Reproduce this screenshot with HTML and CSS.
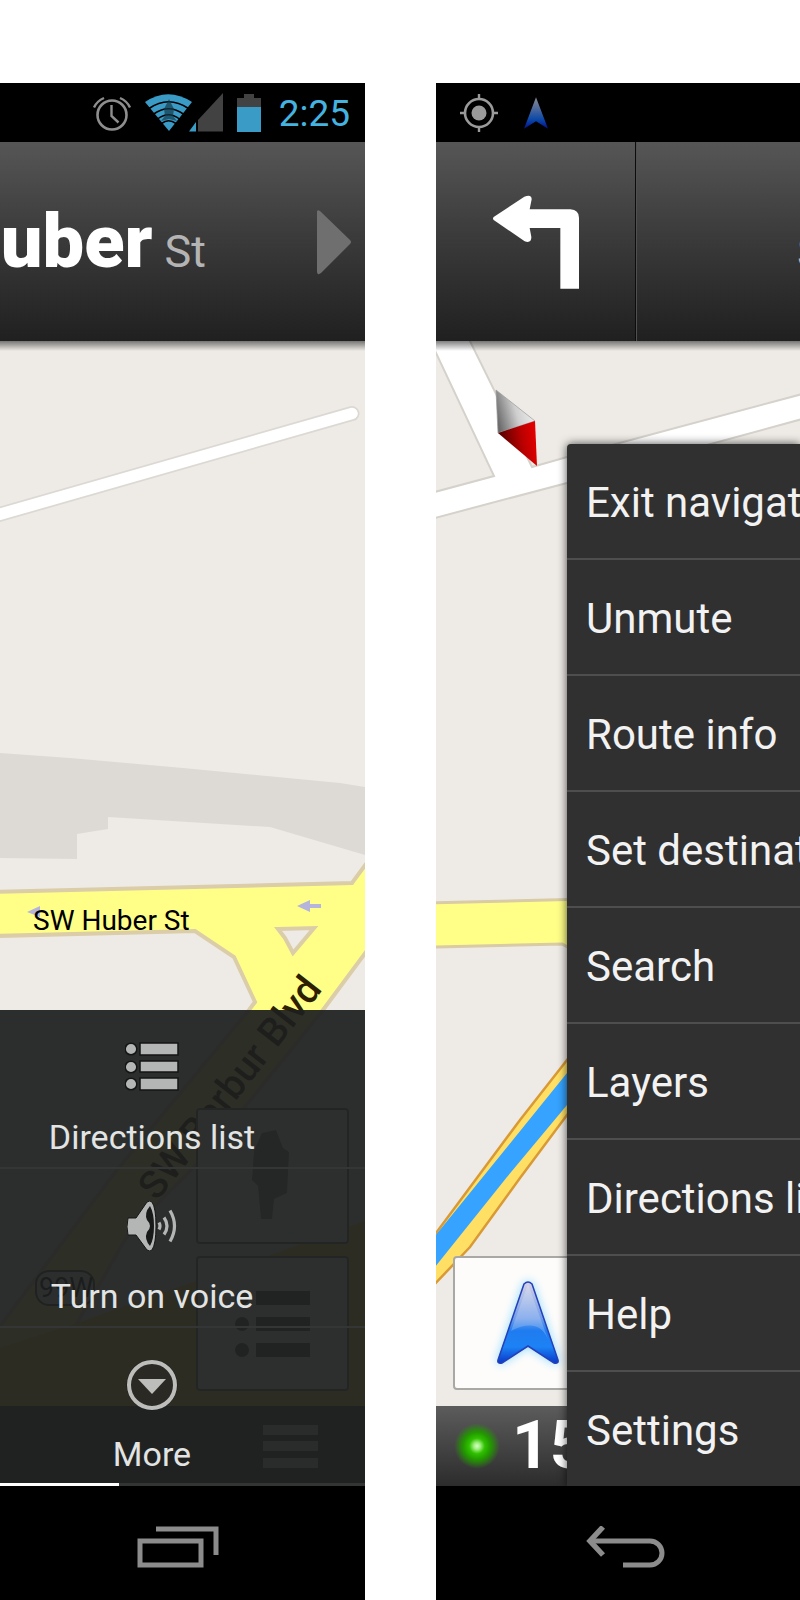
FILE: index.html
```html
<!DOCTYPE html>
<html lang="en">
<head>
  <meta charset="UTF-8">
  <meta name="viewport" content="width=device-width, initial-scale=1.0">
  <title>Navigation menus</title>
  <link rel="stylesheet" href="styles.css">
</head>
<body>
  <main class="screens">

    <section class="phone">
      <div class="status-bar status-right">
        <svg width="38" height="36" viewBox="0 0 38 36" fill="none" stroke="#8e8e8e" stroke-width="3" aria-hidden="true">
          <circle cx="19" cy="20" r="14.5" stroke-width="2.6"/>
          <path d="M18.5 10v11l7 6.5" stroke-width="2.4"/>
          <path d="M1 12.5Q4 6 11 3M37 12.5Q34 6 27 3" stroke-width="2.4"/>
        </svg>
        <svg width="78" height="39" viewBox="0 0 78 39" aria-hidden="true">
          <path d="M0 9Q23-6.500 47 9L24 38z" fill="#3a9cc6"/>
          <path d="M4 15.500Q23.500 2 43.500 15.500M8 21.500Q23.500 10 39 21.500M12 26.500Q23.500 17 35 26.500M16.500 30.500Q23.500 25 31 30.500" fill="none" stroke="#000" stroke-width="1.600"/>
          <path d="M24 6l5 10-1 7 4 5-8-2-8 2 4-5-1-7z" fill="#163b4c" opacity=".7"/>
          <path d="M51 38.500V29L44 38.500z" fill="#3a9cc6"/>
          <path d="M53 38.500V27L78 0v38.500z" fill="#424242"/>
        </svg>
        <svg width="24" height="38" viewBox="0 0 24 38" aria-hidden="true">
          <path d="M0 13V4h7V0h10v4h7v9z" fill="#424242"/>
          <path d="M0 13h24v25H0z" fill="#3a9cc6"/>
        </svg>
        <time class="clock">2:25</time>
      </div>

      <header class="nav-header">
        <h1 class="street"><b>Huber</b> <span>St</span></h1>
        <button class="next" aria-label="Next step">
          <svg width="36" height="66" viewBox="0 0 36 66"><path d="M1 3Q1 0 4 2L34 31Q36 33 34 35L5 64Q1 67 1 62z" fill="#6f6f6f"/></svg>
        </button>
      </header>

      <div class="map">
        <svg class="map-canvas" viewBox="0 0 365 1145" preserveAspectRatio="xMinYMin slice" aria-hidden="true">
          <!-- side road -->
          <g fill="none" stroke-linecap="round">
            <path d="M-20 179L352 72.500" stroke="#dcd8d3" stroke-width="15"/>
            <path d="M-20 179L352 72.500" stroke="#fff" stroke-width="11.500"/>
          </g>
          <!-- building -->
          <path d="M0 412L70 417 183 427 340 442 365 446V514L270 486 108 476V488L77 493V518L0 517z" fill="#dddad6"/>
          <!-- main roads -->
          <path d="M-5 551L352 542 372 515V603L323 669 205 815 130 890 77 982-5 1080V992L117 829 249 669 255 661 234 616 195 590-5 595z" fill="#ffff88" stroke="#dbcda8" stroke-width="4"/>
          <path d="M-5 1008L77 982 127 964 273 913 370 878V1070H-5z" fill="#ffcc5c"/>
          <path d="M278 588L314 587 293 612 285 597z" fill="#eeebe6" stroke="#dbcda8" stroke-width="4"/>
          <path d="M297 565l13-6v4h11v4h-11v4zM27 571l13-6v11z" fill="#b4b4dc"/>
          <text class="road-label" x="33" y="589">SW Huber St</text>
          <text class="road-label road-label-lg" transform="translate(157 861) rotate(-52)">SW Barbur Blvd</text>
          <rect x="36" y="930" width="58" height="34" rx="13" fill="#eeebe6" stroke="#444" stroke-width="2"/>
          <text class="shield" x="39" y="956">99W</text>
          <!-- map buttons -->
          <g fill="#fff" stroke="#777" stroke-width="2">
            <rect x="197" y="768" width="151" height="134" rx="3"/>
            <rect x="197" y="916" width="151" height="133" rx="3"/>
          </g>
          <path d="M262 792l14-3 7 18 6 4-2 41-13 6-2 20h-11l-3-33-6-6 2-29z" fill="#888"/>
          <g fill="#555">
            <path d="M256 950h54v14h-54zM256 976h54v14h-54zM256 1002h54v14h-54z"/>
            <circle cx="242" cy="957" r="7"/><circle cx="242" cy="983" r="7"/><circle cx="242" cy="1009" r="7"/>
          </g>
          <path d="M-5 1065h375v85H-5z" fill="#484848"/>
          <path d="M263 1084h55v10h-55zM263 1100h55v10h-55zM263 1117h55v10h-55z" fill="#ccc"/>
        </svg>

        <nav class="sheet">
          <button class="sheet-item">
            <svg width="54" height="50" viewBox="0 0 54 50" fill="#b4b6b6" stroke="#141515" stroke-width="1.500">
              <circle cx="6" cy="7" r="5.800"/><circle cx="6" cy="25" r="5.800"/><circle cx="6" cy="42" r="5.800"/>
              <path d="M15 1h38v12H15zM15 19h38v11H15zM15 36h38v12H15z"/>
            </svg>
            <span>Directions list</span>
          </button>
          <button class="sheet-item">
            <svg width="50" height="50" viewBox="0 0 50 50">
              <path d="M1 17h8L20 1Q23-1 25 1 29 7 29 25T25 49Q23 51 20 49L9 34H1q-2-8 0-17z" fill="#b4b6b6" stroke="#141515"/>
              <path d="M23 5Q17 12 20 19q6 6 0 12-3 7 3 14 4-7 4-20T23 5z" fill="#181a1a"/>
              <path d="M32 21.500q2 3.500 0 7M37 16.500q6 8.500 0 17M43 9.500q9 15.500 0 31" fill="none" stroke="#b4b6b6" stroke-width="3.200"/>
            </svg>
            <span>Turn on voice</span>
          </button>
          <button class="sheet-item">
            <svg width="52" height="52" viewBox="0 0 52 52">
              <circle cx="26" cy="25" r="25.500" fill="#1c1c1a"/>
              <circle cx="26" cy="25" r="23" fill="#2a2924" stroke="#bdbdbb" stroke-width="4"/>
              <path d="M12 19h28L26 34z" fill="#bdbdbb"/>
            </svg>
            <span>More</span>
          </button>
        </nav>
        <div class="progress"></div>
      </div>

      <footer class="system-bar">
        <button aria-label="Recent apps">
          <svg width="82" height="42" viewBox="0 0 82 42" fill="none" stroke="#8c8c8c" stroke-width="5">
            <path d="M3 15h61v24H3zM19 3h60v26"/>
          </svg>
        </button>
      </footer>
    </section>

    <section class="phone">
      <div class="status-bar status-left">
        <svg width="38" height="38" viewBox="0 0 38 38" fill="none" stroke="#9a9a9a" aria-hidden="true">
          <circle cx="19" cy="19" r="14" stroke-width="2.600"/>
          <circle cx="19" cy="19" r="7.500" fill="#9a9a9a" stroke="none"/>
          <path d="M19 0v6M19 32v6M0 19h6M32 19h6" stroke-width="2.400"/>
        </svg>
        <svg width="24" height="34" viewBox="0 0 26 36" aria-hidden="true">
          <defs>
            <linearGradient id="arrow-dim" x2="0" y2="1">
              <stop offset="0" stop-color="#8a8a90"/><stop offset=".35" stop-color="#4f6a9c"/><stop offset=".7" stop-color="#0c49a8"/><stop offset="1" stop-color="#04108c"/>
            </linearGradient>
          </defs>
          <path d="M13 1L26 35 13 27 0 35z" fill="url(#arrow-dim)"/>
        </svg>
      </div>

      <header class="nav-header">
        <button class="turn" aria-label="Turn left">
          <svg width="86" height="94" viewBox="278 373 258 280">
            <path d="M280 438L372 377Q394 368 394 385L388 415H510Q536 417 536 440V653H480V471H388L393 497Q394 518 373 511L280 447Q276 443 280 438z" fill="#fff"/>
          </svg>
        </button>
        <div class="upcoming">SW</div>
      </header>

      <div class="map">
        <svg class="map-canvas" viewBox="0 0 364 1145" preserveAspectRatio="xMinYMin slice" aria-hidden="true">
          <defs>
            <linearGradient id="needle-top" x1="0" y1=".6" x2="1" y2=".3">
              <stop offset="0" stop-color="#6a6a6a"/><stop offset=".5" stop-color="#cfcfcf"/><stop offset="1" stop-color="#f4f4f4"/>
            </linearGradient>
            <linearGradient id="needle-bottom" x1="0" y1=".5" x2="1" y2=".3">
              <stop offset="0" stop-color="#4a0000"/><stop offset=".6" stop-color="#b80000"/><stop offset="1" stop-color="#e60000"/>
            </linearGradient>
          </defs>
          <g fill="#fff" stroke="#d5d1cb" stroke-width="2">
            <path d="M-10-10L0 12 58 135-5 152V178L131 142 370 77V52L131 116 96 126 29-10z"/>
          </g>
          <path d="M60 49L99 80 62 92z" fill="url(#needle-top)" stroke="#999" stroke-width=".7"/>
          <path d="M99 80L101 125 62 92z" fill="url(#needle-bottom)"/>
          <path d="M-5 562L150 558V616L126 603-5 606z" fill="#ffff88" stroke="#d8cba6" stroke-width="3"/>
          <!-- route -->
          <path d="M-5 899L0 892 84 779 131 719 160 682V738L131 774 84 837 34 906-5 947z" fill="#ffe065" stroke="#d99a35" stroke-width="2.500"/>
          <path d="M-5 900L131 732 160 697V728L131 764 71 836-5 931z" fill="#35a3ff"/>
        </svg>

        <button class="locate" aria-label="My location">
          <svg width="64" height="84" viewBox="0 0 64 84">
            <defs>
              <linearGradient id="arrow" x2="0" y2="1">
                <stop offset="0" stop-color="#d5d2e6"/><stop offset=".45" stop-color="#6f9dea"/><stop offset=".6" stop-color="#1f7cf0"/><stop offset=".8" stop-color="#1c82f5"/><stop offset="1" stop-color="#0838c8"/>
              </linearGradient>
            </defs>
            <path d="M28 3Q32-1 36 3L62 79Q63 83 58 82L32 65 6 82Q1 83 2 79z" fill="url(#arrow)" stroke="#2740b8" stroke-width="1.500"/>
            <path d="M32 3L53 61Q44 35 15 50z" fill="#fff" opacity=".2"/>
          </svg>
        </button>

        <div class="trip-bar">
          <span class="led"></span>
          <strong class="eta">15</strong>
        </div>

        <nav class="menu">
          <button class="menu-item">Exit navigation</button>
          <button class="menu-item">Unmute</button>
          <button class="menu-item">Route info</button>
          <button class="menu-item">Set destination</button>
          <button class="menu-item">Search</button>
          <button class="menu-item">Layers</button>
          <button class="menu-item">Directions list</button>
          <button class="menu-item">Help</button>
          <button class="menu-item">Settings</button>
        </nav>
      </div>

      <footer class="system-bar">
        <button aria-label="Back">
          <svg width="80" height="42" viewBox="0 0 80 42" fill="none" stroke="#8c8c8c" stroke-width="5">
            <path d="M4 15h60a12 12 0 0 1 0 24H37"/>
            <path d="M17 1L4 15 17 29" stroke-width="5.500"/>
          </svg>
        </button>
      </footer>
    </section>

  </main>
</body>
</html>
```

FILE: styles.css
```css
* {
  box-sizing: border-box;
}
body {
  margin: 0;
  background: #fff;
  font-family: Roboto, "Liberation Sans", sans-serif;
}
button {
  padding: 0;
  border: none;
  background: none;
  color: inherit;
  font-family: inherit;
  cursor: pointer;
}
svg {
  display: block;
  flex-shrink: 0;
}
.screens {
  display: grid;
  grid-template-columns: 365fr 364fr;
  gap: 71px;
  min-height: 100vh;
  padding-top: 83px;
}
.phone {
  display: flex;
  flex-direction: column;
  min-width: 0;
  overflow: hidden;
  background: #000;
}

/* status bar */
.status-bar {
  display: flex;
  align-items: center;
  height: 59px;
}
.status-right {
  justify-content: flex-end;
  gap: 14px;
  padding-right: 15px;
}
.status-left {
  gap: 26px;
  padding-left: 24px;
}
.clock {
  margin-left: 4px;
  padding-top: 2px;
  color: #45b3e0;
  font-size: 37px;
  line-height: 40px;
}

/* direction header */
.nav-header {
  display: flex;
  align-items: stretch;
  height: 199px;
  background: linear-gradient(#565656, #3c3c3c 45%, #202020);
}
.street {
  flex: 1;
  display: flex;
  justify-content: flex-end;
  align-items: baseline;
  gap: 12px;
  min-width: 0;
  margin: 0;
  padding-top: 56px;
  color: #fff;
  font-size: 74px;
  line-height: 88px;
}
.street span {
  color: #b4b4b4;
  font-size: 45px;
  font-weight: 400;
}
.next {
  padding: 0 13px 0 110px;
}
.turn {
  display: flex;
  justify-content: center;
  align-items: center;
  width: 200px;
  border-right: 1px solid #0c0c0c;
}
/* street name runs past the right edge */
.upcoming {
  flex: 1;
  display: flex;
  align-items: center;
  min-width: 0;
  padding-top: 22px;
  padding-left: 160px;
  border-left: 1px solid #505050;
  color: #b4b4b4;
  font-size: 45px;
}

/* map */
.map {
  position: relative;
  flex: 1;
  display: flex;
  flex-direction: column;
  justify-content: flex-end;
  min-height: 1145px;
  overflow: hidden;
  background: #eeebe6;
}
.map::before {
  content: "";
  position: absolute;
  top: 0;
  left: 0;
  right: 0;
  height: 10px;
  background: linear-gradient(rgba(0, 0, 0, 0.5), transparent);
  z-index: 1;
}
.map-canvas {
  position: absolute;
  top: 0;
  left: 0;
  width: 100%;
  height: 100%;
}
.road-label {
  font-size: 28px;
  fill: #000;
}
.road-label-lg {
  font-size: 39px;
  font-weight: 500;
  fill: #2e1f00;
}
.shield {
  font-size: 27px;
}
.locate {
  position: absolute;
  left: 17px;
  bottom: 96px;
  display: flex;
  justify-content: center;
  align-items: center;
  width: 150px;
  height: 134px;
  border: 2px solid #aaa8a5;
  border-radius: 4px;
  background: #fdfcfb;
}
.locate svg {
  filter: drop-shadow(0 0 5px #8fdcff);
}
.trip-bar {
  position: relative;
  display: flex;
  align-items: center;
  gap: 12px;
  height: 80px;
  padding-left: 18px;
  background: linear-gradient(#5c5c5c, #2c2c2c);
  color: #fff;
}
.led {
  width: 46px;
  height: 46px;
  border-radius: 50%;
  background: radial-gradient(circle, #d8ffc8 0, #a0f080 10%, #30c000 24%, #229800 42%, transparent 70%);
}
.eta {
  font-size: 66px;
  line-height: 72px;
}

/* options sheet, left phone */
.sheet {
  position: relative;
  display: flex;
  flex-direction: column;
  background: rgba(29, 31, 31, 0.93);
}
.sheet-item {
  display: flex;
  flex-direction: column;
  align-items: center;
  justify-content: space-between;
  height: 159px;
  padding: 32px 61px 10px 0;
  border-bottom: 2px solid #343636;
  color: #e2e4e4;
  font-size: 34px;
  line-height: 40px;
}
.sheet-item:last-child {
  height: 158px;
  padding-bottom: 12px;
  border-bottom: none;
}
.progress {
  position: absolute;
  left: 0;
  right: 0;
  bottom: 0;
  height: 3px;
  background: linear-gradient(90deg, #fff 119px, #333535 119px);
}

/* overflow menu, right phone */
.menu {
  position: absolute;
  top: 103px;
  left: 131px;
  right: 0;
  bottom: 0;
  display: flex;
  flex-direction: column;
  border-radius: 4px 0 0 0;
  background: #303030;
  box-shadow: 0 0 10px rgba(0, 0, 0, 0.7);
}
.menu-item {
  height: 116px;
  padding-top: 3px;
  padding-left: 19px;
  border-bottom: 2px solid #4e4e4e;
  color: #f2f2f2;
  font-size: 42px;
  text-align: left;
  white-space: nowrap;
}
.menu-item:last-child {
  height: 114px;
  border-bottom: none;
}

/* system bar */
.system-bar {
  display: flex;
  justify-content: center;
  align-items: center;
  height: 114px;
  padding-top: 7px;
  padding-right: 10px;
}
.phone:last-child .system-bar {
  padding-right: 0;
  padding-left: 16px;
}
```
